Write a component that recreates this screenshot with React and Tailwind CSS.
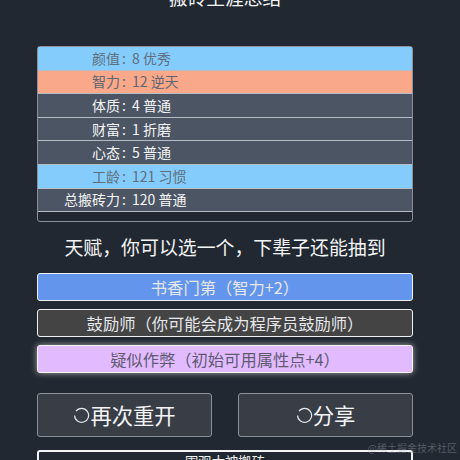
const font = { fontFamily: '"Noto Sans CJK SC", sans-serif' };

const rows = [
  { label: '颜值', value: '8 优秀', rowClass: 'bg-[#84ccfb] text-[#5f6f7e]' },
  { label: '智力', value: '12 逆天', rowClass: 'bg-[#faa88a] text-[#5f6672]' },
  { label: '体质', value: '4 普通', rowClass: 'bg-[#4b5563] text-[#f3f4f6]' },
  { label: '财富', value: '1 折磨', rowClass: 'bg-[#4b5563] text-[#f3f4f6]' },
  { label: '心态', value: '5 普通', rowClass: 'bg-[#4b5563] text-[#f3f4f6]' },
  { label: '工龄', value: '121 习惯', rowClass: 'bg-[#84ccfb] text-[#5f6f7e]' },
  { label: '总搬砖力', value: '120 普通', rowClass: 'bg-[#4b5563] text-[#f3f4f6]' },
];

const Spinner = () => (
  <svg width="17" height="17" viewBox="0 0 17 17" fill="none" stroke="#e5e7eb" strokeWidth="1.2" className="shrink-0">
    <path d="M3 4.2 A7 7 0 1 1 1.6 8.5" />
  </svg>
);

export default function App() {
  return (
    <div className="relative h-[460px] w-[460px] overflow-hidden bg-[#222831]" style={font}>
      <div className="w-[376px] ml-[37px]">
        <h1 className="mt-[-15px] h-[24px] text-center text-[18.72px] leading-[24px] text-[#f3f4f6]">搬砖生涯总结</h1>

        <div className="mt-[37px] h-[176px] rounded-[3px] border border-[#8b909a] bg-[#222831]">
          {rows.map((row) => (
            <div key={row.label} className={`flex h-[23.6px] items-center border-b border-[#b6bcc4] text-[14px] ${row.rowClass}`}>
              <span className="w-[82px] text-right">{row.label}</span>
              <span className="w-[12px] pl-[2px]">:</span>
              <span>{row.value}</span>
            </div>
          ))}
        </div>

        <h3 className="mt-[11px] h-[28px] text-center text-[18.9px] leading-[28px] text-[#f3f4f6]">天赋，你可以选一个，下辈子还能抽到</h3>

        <div className="mt-[12px] flex flex-col gap-[8px]">
          <div className="flex h-[28px] items-center justify-center rounded-[3px] border-[1.5px] border-[#eef0f3] bg-[#6495ed] text-[16.3px] text-[#e5e7eb]">书香门第（智力+2）</div>
          <div className="flex h-[28px] items-center justify-center rounded-[3px] border-[1.5px] border-[#eef0f3] bg-[#444444] text-[16.3px] text-[#e5e7eb]">鼓励师（你可能会成为程序员鼓励师）</div>
          <div className="flex h-[28px] items-center justify-center rounded-[3px] border-[1.5px] border-[#f3f4f6] bg-[#e2baff] text-[16.3px] text-[#5f5a72] shadow-[0_0_6px_rgba(255,255,255,0.6)]">疑似作弊（初始可用属性点+4）</div>
        </div>

        <div className="mt-[20px] flex justify-between">
          <button className="flex h-[44px] w-[175px] items-center justify-center rounded-[3px] border border-[#8b909a] bg-[#393e46] text-[21.3px] text-[#f3f4f6]">
            <Spinner />
            再次重开
          </button>
          <button className="flex h-[44px] w-[175px] items-center justify-center rounded-[3px] border border-[#8b909a] bg-[#393e46] text-[21.3px] text-[#f3f4f6]">
            <Spinner />
            分享
          </button>
        </div>

        <div className="mt-[13px] flex h-[28px] items-start justify-center rounded-[3px] border-2 border-[#f3f4f6] bg-[#222831] text-[13.33px] leading-[20px] text-[#f3f4f6]">围观大神搬砖</div>
      </div>

      <span className="absolute right-[3px] bottom-[5px] text-[10px] text-[#9ca3af] opacity-40">@稀土掘金技术社区</span>
    </div>
  );
}
